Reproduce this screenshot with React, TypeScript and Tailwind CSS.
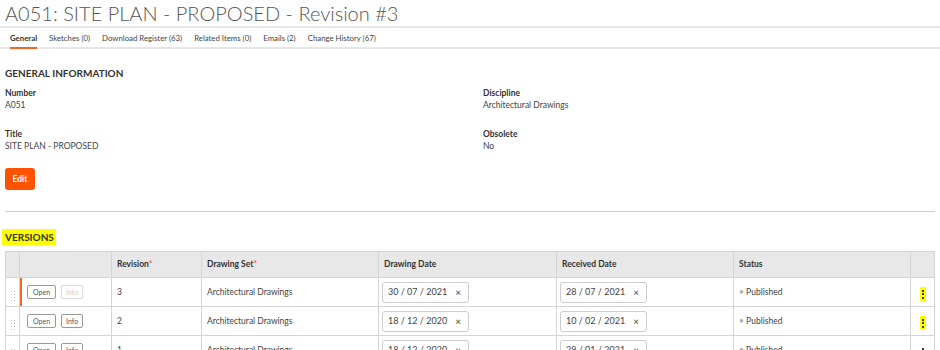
const tabs = [
  ['General', true],
  ['Sketches (0)', false],
  ['Download Register (63)', false],
  ['Related Items (0)', false],
  ['Emails (2)', false],
  ['Change History (67)', false],
] as const;

const versions = [
  { rev: '3', set: 'Architectural Drawings', drawn: '30 / 07 / 2021', received: '28 / 07 / 2021', current: true },
  { rev: '2', set: 'Architectural Drawings', drawn: '18 / 12 / 2020', received: '10 / 02 / 2021', current: false },
  { rev: '1', set: 'Architectural Drawings', drawn: '18 / 12 / 2020', received: '29 / 01 / 2021', current: false },
];

function Field({ label, value }: { label: string; value: string }) {
  return (
    <div>
      <p className="text-[8.5px] font-bold leading-[12px] text-[#333]">{label}</p>
      <p className="text-[8.5px] leading-[12px] text-[#444]">{value}</p>
    </div>
  );
}

function DateBox({ value }: { value: string }) {
  return (
    <div className="flex h-[21px] w-[87px] items-center justify-between rounded-[3px] border border-[#ccc] pl-[5px] pr-[7px] text-[9px] text-[#444]">
      <span>{value}</span>
      <span className="text-[10px] leading-none text-[#444]">×</span>
    </div>
  );
}

function Kebab({ highlight }: { highlight: boolean }) {
  return (
    <span className={`inline-flex h-[14px] w-[6px] flex-col items-center justify-center gap-[1.5px] ${highlight ? 'bg-[#ffff00]' : ''}`}>
      <span className="h-[2px] w-[2px] rounded-full bg-black" />
      <span className="h-[2px] w-[2px] rounded-full bg-black" />
      <span className="h-[2px] w-[2px] rounded-full bg-black" />
    </span>
  );
}

export default function App() {
  return (
    <div className="h-[350px] w-[940px] overflow-hidden bg-white font-['Lato',sans-serif] text-[#333]">
      <h1 className="pl-[5px] pt-[1px] text-[20px] font-light leading-[24px] text-[#555]">
        A051: SITE PLAN - PROPOSED - Revision #3
      </h1>
      <div className="mt-[1px] h-[2px] bg-[#e6e6e6]" />

      <div className="mt-[3px] flex gap-[12px] border-b-2 border-[#e6e6e6] pl-[10px]">
        {tabs.map(([name, active]) => (
          <div
            key={name}
            className={`pb-[2px] text-[7.8px] leading-[14px] ${
              active ? 'border-b-2 border-[#f26522] font-bold text-[#333] -mb-[2px]' : 'text-[#444]'
            }`}
          >
            {name}
          </div>
        ))}
      </div>

      <div className="px-[5px]">
        <h2 className="mt-[18px] text-[10px] font-bold leading-[12px] text-[#333]">GENERAL INFORMATION</h2>
        <div className="mt-[8px] grid grid-cols-[478px_1fr] gap-y-[17px]">
          <Field label="Number" value="A051" />
          <Field label="Discipline" value="Architectural Drawings" />
          <Field label="Title" value="SITE PLAN - PROPOSED" />
          <Field label="Obsolete" value="No" />
        </div>
        <button className="mt-[16px] block h-[22px] w-[30px] rounded-[3px] bg-[#ff5200] text-[8.5px] font-bold text-white">
          Edit
        </button>
        <div className="mt-[21px] h-[1px] bg-[#f5c2a5]" />

        <h2 className="mt-[17px] -ml-[3px] inline-block bg-[#ffff00] pl-[3px] pr-[2px] text-[10px] font-bold leading-[16px] text-[#333]">
          VERSIONS
        </h2>

        <table className="mt-[4px] w-[929px] table-fixed border-collapse text-[8.5px]">
          <colgroup>
            <col className="w-[14px]" />
            <col className="w-[92px]" />
            <col className="w-[90px]" />
            <col className="w-[177px]" />
            <col className="w-[178px]" />
            <col className="w-[177px]" />
            <col className="w-[177px]" />
            <col className="w-[24px]" />
          </colgroup>
          <thead>
            <tr className="h-[26px] bg-[#e8e8e8] text-left font-bold text-[#333]">
              <th className="border border-[#d4d4d4]" />
              <th className="border border-[#d4d4d4]" />
              <th className="border border-[#d4d4d4] pl-[5px]">
                Revision<span className="text-[#f26522]">*</span>
              </th>
              <th className="border border-[#d4d4d4] pl-[5px]">
                Drawing Set<span className="text-[#f26522]">*</span>
              </th>
              <th className="border border-[#d4d4d4] pl-[5px]">Drawing Date</th>
              <th className="border border-[#d4d4d4] pl-[5px]">Received Date</th>
              <th className="border border-[#d4d4d4] pl-[5px]">Status</th>
              <th className="border border-[#d4d4d4]" />
            </tr>
          </thead>
          <tbody>
            {versions.map((v, i) => (
              <tr key={i} className="h-[29px] text-[#444]">
                <td className="border border-[#d4d4d4] text-center">
                  <span className="inline-grid grid-cols-2 gap-x-[2px] gap-y-[2px]">
                    {Array.from({ length: 8 }).map((_, j) => (
                      <span key={j} className="h-[1px] w-[1px] bg-[#bbb]" />
                    ))}
                  </span>
                </td>
                <td className={`border border-[#d4d4d4] pl-[7px] ${v.current ? 'shadow-[inset_2px_0_0_#f26522]' : ''}`}>
                  <div className="flex gap-[5px]">
                    <span className="rounded-[2px] border border-[#999] px-[5px] py-[1px] text-[7px] leading-[10px] text-[#555]">
                      Open
                    </span>
                    <span
                      className={`rounded-[2px] border px-[4px] py-[1px] text-[7px] leading-[10px] ${
                        v.current ? 'border-[#ddd] text-[#ccc]' : 'border-[#999] text-[#555]'
                      }`}
                    >
                      Info
                    </span>
                  </div>
                </td>
                <td className="border border-[#d4d4d4] pl-[5px]">{v.rev}</td>
                <td className="border border-[#d4d4d4] pl-[5px]">{v.set}</td>
                <td className="border border-[#d4d4d4] pl-[3px]">
                  <DateBox value={v.drawn} />
                </td>
                <td className="border border-[#d4d4d4] pl-[3px]">
                  <DateBox value={v.received} />
                </td>
                <td className="border border-[#d4d4d4] pl-[5px]">
                  <span className="text-[#aaa]">•</span> Published
                </td>
                <td className="border border-[#d4d4d4] text-center">
                  <Kebab highlight={i < 2} />
                </td>
              </tr>
            ))}
          </tbody>
        </table>
      </div>
    </div>
  );
}
